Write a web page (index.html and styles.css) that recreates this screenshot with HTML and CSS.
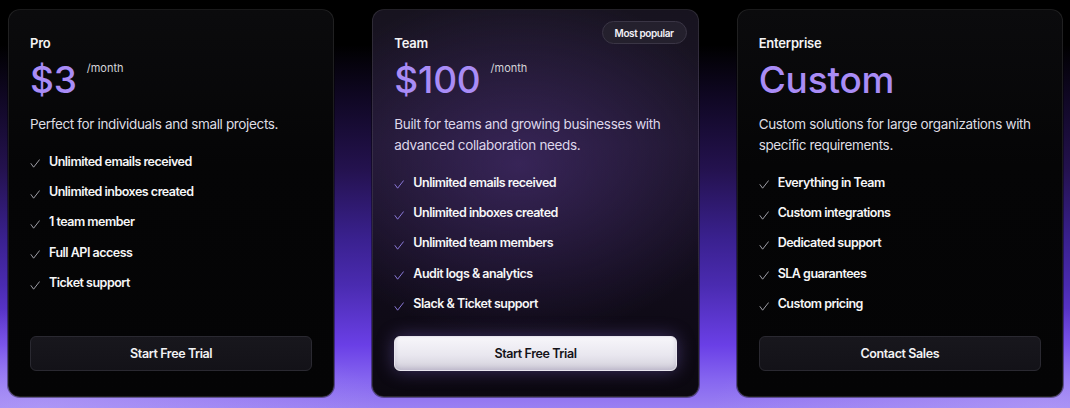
FILE: index.html
```html
<!DOCTYPE html>
<html lang="en">
<head>
<meta charset="utf-8">
<title>Pricing</title>
<link rel="stylesheet" href="styles.css">
</head>
<body>
<main class="pricing">
  <section class="card">
    <h3 class="plan">Pro</h3>
    <div class="price"><span class="amount">$3</span><span class="per">/month</span></div>
    <p class="desc">Perfect for individuals and small projects.</p>
    <ul class="features">
      <li><svg class="check" viewBox="0 0 10 9"><path d="M1 4.6 L3.6 8.2 L9.4 0.8"/></svg>Unlimited emails received</li>
      <li><svg class="check" viewBox="0 0 10 9"><path d="M1 4.6 L3.6 8.2 L9.4 0.8"/></svg>Unlimited inboxes created</li>
      <li><svg class="check" viewBox="0 0 10 9"><path d="M1 4.6 L3.6 8.2 L9.4 0.8"/></svg>1 team member</li>
      <li><svg class="check" viewBox="0 0 10 9"><path d="M1 4.6 L3.6 8.2 L9.4 0.8"/></svg>Full API access</li>
      <li><svg class="check" viewBox="0 0 10 9"><path d="M1 4.6 L3.6 8.2 L9.4 0.8"/></svg>Ticket support</li>
    </ul>
    <button class="btn">Start Free Trial</button>
  </section>

  <section class="card card-featured">
    <span class="badge">Most popular</span>
    <h3 class="plan">Team</h3>
    <div class="price"><span class="amount">$100</span><span class="per">/month</span></div>
    <p class="desc">Built for teams and growing businesses with advanced collaboration needs.</p>
    <ul class="features">
      <li><svg class="check" viewBox="0 0 10 9"><path d="M1 4.6 L3.6 8.2 L9.4 0.8"/></svg>Unlimited emails received</li>
      <li><svg class="check" viewBox="0 0 10 9"><path d="M1 4.6 L3.6 8.2 L9.4 0.8"/></svg>Unlimited inboxes created</li>
      <li><svg class="check" viewBox="0 0 10 9"><path d="M1 4.6 L3.6 8.2 L9.4 0.8"/></svg>Unlimited team members</li>
      <li><svg class="check" viewBox="0 0 10 9"><path d="M1 4.6 L3.6 8.2 L9.4 0.8"/></svg>Audit logs &amp; analytics</li>
      <li><svg class="check" viewBox="0 0 10 9"><path d="M1 4.6 L3.6 8.2 L9.4 0.8"/></svg>Slack &amp; Ticket support</li>
    </ul>
    <button class="btn btn-light">Start Free Trial</button>
  </section>

  <section class="card">
    <h3 class="plan">Enterprise</h3>
    <div class="price"><span class="amount">Custom</span></div>
    <p class="desc">Custom solutions for large organizations with specific requirements.</p>
    <ul class="features">
      <li><svg class="check" viewBox="0 0 10 9"><path d="M1 4.6 L3.6 8.2 L9.4 0.8"/></svg>Everything in Team</li>
      <li><svg class="check" viewBox="0 0 10 9"><path d="M1 4.6 L3.6 8.2 L9.4 0.8"/></svg>Custom integrations</li>
      <li><svg class="check" viewBox="0 0 10 9"><path d="M1 4.6 L3.6 8.2 L9.4 0.8"/></svg>Dedicated support</li>
      <li><svg class="check" viewBox="0 0 10 9"><path d="M1 4.6 L3.6 8.2 L9.4 0.8"/></svg>SLA guarantees</li>
      <li><svg class="check" viewBox="0 0 10 9"><path d="M1 4.6 L3.6 8.2 L9.4 0.8"/></svg>Custom pricing</li>
    </ul>
    <button class="btn">Contact Sales</button>
  </section>
</main>
</body>
</html>
```

FILE: styles.css
```css
* { box-sizing: border-box; }

html, body {
  margin: 0;
  height: 408px;
  overflow: hidden;
}

body {
  font-family: "Inter", "Liberation Sans", sans-serif;
  color: #fff;
  background:
    radial-gradient(ellipse 45% 35% at 4% 100%, rgba(185, 165, 248, 0.6), rgba(185, 165, 248, 0) 70%),
    radial-gradient(ellipse 45% 35% at 98% 100%, rgba(185, 165, 248, 0.55), rgba(185, 165, 248, 0) 70%),
    linear-gradient(180deg, #000 0px, #000 45px, #0f0722 95px, #24124f 170px, #3a2190 240px, #4a2bb0 285px, #6a3fe6 345px, #8666f0 380px, #9a80f2 408px);
}

.pricing {
  display: grid;
  grid-template-columns: repeat(3, 1fr);
  gap: 38px;
  padding: 9px 7px 11px 8px;
  height: 408px;
}

.card {
  position: relative;
  display: flex;
  flex-direction: column;
  padding: 25px 21px 25px 21px;
  border-radius: 12px;
  background: linear-gradient(180deg, #0b0b0d 0%, #050506 40%, #040405 100%);
  border: 1px solid rgba(255, 255, 255, 0.09);
  box-shadow: 0 0 0 1px rgba(0, 0, 0, 0.4);
}

.card-featured {
  background:
    radial-gradient(ellipse 70% 45% at 45% 40%, rgba(75, 48, 120, 0.6), rgba(75, 48, 120, 0) 100%),
    linear-gradient(180deg, #17131f 0%, #1b1428 35%, #110c1a 70%, #0b0810 100%);
  border-color: rgba(255, 255, 255, 0.1);
}

.plan {
  margin: 0;
  font-size: 13px;
  line-height: 16px;
  font-weight: 600;
  color: #f4f4f5;
  letter-spacing: -0.2px;
}

.price {
  display: flex;
  align-items: flex-start;
  margin-top: 9px;
  height: 40px;
}

.amount {
  font-size: 37px;
  line-height: 40px;
  font-weight: 500;
  color: #a98cf6;
  letter-spacing: -0.2px;
}

.per {
  margin-left: 10px;
  margin-top: 1px;
  font-size: 11px;
  line-height: 14px;
  color: #d4d4d8;
}

.desc {
  margin: 14px 0 0;
  font-size: 13.5px;
  line-height: 21px;
  color: #dedde2;
  letter-spacing: -0.35px;
}

.card-featured .desc { color: #ddd6ea; }

.features {
  list-style: none;
  margin: 11px 0 0;
  padding: 0;
  display: flex;
  flex-direction: column;
}

.features li {
  display: flex;
  align-items: center;
  height: 30.4px;
  font-size: 12.5px;
  font-weight: 600;
  color: #f6f6f7;
  letter-spacing: -0.5px;
}

.check {
  width: 10px;
  height: 9px;
  margin: 5px 9px 0 0;
  flex: none;
  fill: none;
  stroke: #9e9ea6;
  stroke-width: 1;
  stroke-linecap: round;
  stroke-linejoin: round;
}

.card-featured .check { stroke: #8a78d8; }

.btn {
  margin-top: auto;
  height: 35px;
  width: 100%;
  border-radius: 6px;
  border: 1px solid #2a2931;
  background: linear-gradient(180deg, #18171d, #131218);
  color: #f2f2f4;
  font-family: inherit;
  font-size: 12.5px;
  font-weight: 600;
  letter-spacing: -0.4px;
  cursor: pointer;
}

.btn-light {
  border-color: #e8e6ee;
  background: linear-gradient(180deg, #f7f6fa 0%, #e9e7ef 55%, #d2cfda 100%);
  color: #141218;
  box-shadow: 0 0 18px rgba(150, 120, 240, 0.35), inset 0 -2px 4px rgba(120, 110, 150, 0.25);
}

.badge {
  position: absolute;
  top: 11px;
  right: 11px;
  height: 23px;
  padding: 0 12px;
  display: flex;
  align-items: center;
  border-radius: 12px;
  background: #24202d;
  border: 1px solid #3a3545;
  font-size: 10px;
  font-weight: 600;
  color: #f2f0f6;
  letter-spacing: -0.4px;
}
```
